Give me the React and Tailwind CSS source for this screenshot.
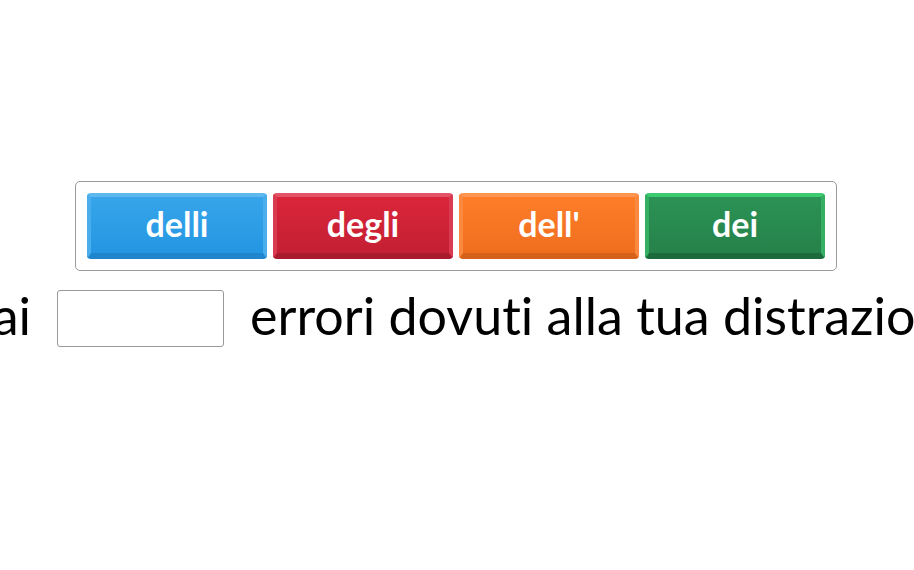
import React from "react";

const options = [
  {
    label: "delli",
    cls: "bg-gradient-to-b from-[#36a5ea] to-[#2496e2] border-t-[#5db8ef] border-x-[#4aaeec] border-b-[#1f85cc]",
  },
  {
    label: "degli",
    cls: "bg-gradient-to-b from-[#da263a] to-[#c41f33] border-t-[#e35467] border-x-[#d93c50] border-b-[#a91a2c]",
  },
  {
    label: "dell'",
    cls: "bg-gradient-to-b from-[#fd7d29] to-[#ef6f1f] border-t-[#fe9652] border-x-[#fb8a40] border-b-[#d5611a]",
  },
  {
    label: "dei",
    cls: "bg-gradient-to-b from-[#2b9255] to-[#26824a] border-t-[#3ccb6e] border-x-[#34b062] border-b-[#1d6b3c]",
  },
];

export default function App() {
  return (
    <div
      className="w-[914px] h-[570px] bg-white overflow-hidden flex flex-col"
      style={{ fontFamily: "Lato, 'Open Sans', sans-serif", fontVariantLigatures: "none" }}
    >
      {/* ── Answer options ── */}
      <div className="flex justify-center pt-[181px] pr-[2px]">
        <div className="flex gap-[6px] p-[11px] border border-[#9a9a9a] rounded-[5px] bg-white">
          {options.map((o) => (
            <div
              key={o.label}
              className={`w-[180px] h-[66px] rounded-[4px] border-t-[4px] border-x-[4px] border-b-[6px] flex items-center justify-center text-white font-bold text-[34px] pb-[3px] ${o.cls}`}
            >
              {o.label}
            </div>
          ))}
        </div>
      </div>

      {/* ── Sentence (wider than the window, centred) ── */}
      <div className="flex justify-center mt-[18px] whitespace-nowrap">
        <div className="flex items-center shrink-0 ml-[24px] text-[52px] text-black leading-none">
          <span className="pb-[6px]">Hai</span>
          <div className="w-[167px] h-[57px] mx-[26px] border border-[#999] rounded-[3px] bg-white" />
          <span className="pb-[6px]">errori dovuti alla tua distrazione.</span>
        </div>
      </div>
    </div>
  );
}
